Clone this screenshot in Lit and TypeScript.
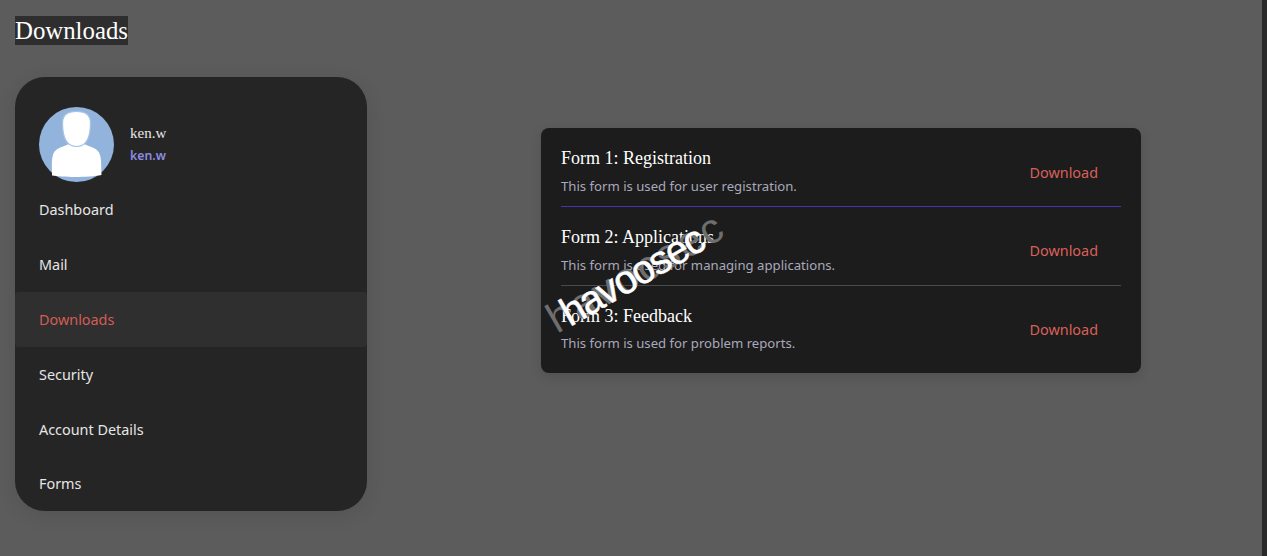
import { LitElement, html, css } from "lit";
import { customElement } from "lit/decorators.js";

const SANS = css`"Noto Sans", sans-serif`;

@customElement("app-root")
export class AppRoot extends LitElement {
  static styles = css`
    :host {
      display: block;
      width: 1267px;
      height: 556px;
      background: #5c5c5c;
      position: relative;
      overflow: hidden;
      font-family: "Liberation Serif", serif;
    }
    .page {
      display: flex;
      flex-direction: column;
      height: 100%;
      padding: 16px 0 0 15px;
      box-sizing: border-box;
      border-right: 5px solid #2a2a2a;
    }
    h1 {
      margin: 0 0 32px;
      font-size: 24.8px;
      line-height: 29px;
      font-weight: 400;
      color: #fff;
      align-self: flex-start;
      background: #2e2e2e;
    }
    .main {
      display: flex;
      align-items: flex-start;
    }
    .side {
      width: 352px;
      height: 434px;
      flex: none;
      box-sizing: border-box;
      background: #252525;
      border-radius: 30px;
      padding-top: 30px;
      box-shadow: 0 4px 20px rgba(0, 0, 0, 0.1);
      font-family: ${SANS};
      overflow: hidden;
    }
    .profile {
      display: flex;
      align-items: center;
      gap: 16px;
      padding-left: 24px;
    }
    .avatar {
      display: block;
      width: 75px;
      height: 75px;
    }
    .who {
      display: flex;
      flex-direction: column;
      gap: 6px;
    }
    .name {
      font-family: "Liberation Serif", serif;
      font-size: 15px;
      line-height: 17px;
      color: #e8e8e8;
    }
    .handle {
      font-size: 12.3px;
      line-height: 16px;
      font-weight: 600;
      color: #8b8be0;
    }
    nav {
      display: flex;
      flex-direction: column;
      margin-top: 0.5px;
    }
    nav a {
      display: flex;
      align-items: center;
      height: 54.8px;
      padding-left: 24px;
      font-size: 14.4px;
      color: #e6e6e6;
    }
    nav a.active {
      background: #2f2f2f;
      color: #d45c54;
      border-radius: 4px;
    }
    .wrap {
      flex: 1;
      padding: 51px 0 0 174px;
    }
    .card {
      width: 600px;
      box-sizing: border-box;
      background: #1c1c1c;
      border-radius: 8px;
      padding: 0 20px 8.6px;
      box-shadow: 0 4px 12px rgba(0, 0, 0, 0.12);
    }
    .row {
      display: flex;
      align-items: center;
      justify-content: space-between;
      height: 78.8px;
      padding-top: 10px;
      border-bottom: 1px solid #4a4a4a;
      box-sizing: border-box;
    }
    .row.one {
      border-bottom-color: #4b32b0;
    }
    .row.last {
      border-bottom-color: transparent;
    }
    .title {
      font-size: 18px;
      line-height: 21px;
      color: #fff;
    }
    .desc {
      margin-top: 8px;
      font-family: ${SANS};
      font-size: 13.15px;
      line-height: 18px;
      color: #a9a9bb;
    }
    .row.last .desc {
      margin-top: 7px;
    }
    .dl {
      margin-right: 23px;
      padding-top: 0.4px;
      font-family: ${SANS};
      font-size: 14.4px;
      color: #d9605a;
    }
    .mark,
    .ghost {
      position: absolute;
      font-family: "Liberation Sans", sans-serif;
      line-height: 40px;
      white-space: nowrap;
      transform-origin: left center;
      transform: rotate(-30deg);
    }
    .mark {
      left: 563px;
      top: 295px;
      font-size: 40px;
      letter-spacing: -1.6px;
      color: #fff;
      -webkit-text-stroke: 0.5px #fff;
    }
    .ghost {
      left: 550px;
      top: 302px;
      font-size: 42px;
      letter-spacing: 2.6px;
      color: #6e6e6e;
    }
  `;

  render() {
    const forms = [
      ["Form 1: Registration", "This form is used for user registration.", "one"],
      ["Form 2: Applications", "This form is used for managing applications.", ""],
      ["Form 3: Feedback", "This form is used for problem reports.", "last"],
    ];
    return html`
      <div class="page">
        <h1>Downloads</h1>
        <div class="main">
          <aside class="side">
            <div class="profile">
              <svg class="avatar" viewBox="0 0 75 75">
                <circle cx="37.5" cy="37.5" r="37.5" fill="#92b4dc" />
                <path d="M13 68.5 C13 60 12.5 54 13.5 50 C14.5 44 18 41.5 24 39.5 L30 37 L45 37 L51 39.5 C57 41.5 60.5 44 61.5 50 C62.5 54 62 60 62.5 68 C50 70.5 25 70.5 13 68.5 Z" fill="#fff" />
                <path d="M23.5 16 C23.5 8 28 4.5 37.5 4.5 C47 4.5 51.5 8 51.5 16 C51.5 32 46 39.5 37.5 39.5 C29 39.5 23.5 32 23.5 16 Z" fill="#fff" stroke="#a8c3e2" stroke-width="1.2" />
              </svg>
              <div class="who">
                <span class="name">ken.w</span>
                <span class="handle">ken.w</span>
              </div>
            </div>
            <nav>
              <a>Dashboard</a>
              <a>Mail</a>
              <a class="active">Downloads</a>
              <a>Security</a>
              <a>Account Details</a>
              <a>Forms</a>
            </nav>
          </aside>
          <div class="wrap">
            <section class="card">
              ${forms.map(
                ([t, d, c]) => html`
                  <div class="row ${c}">
                    <div>
                      <div class="title">${t}</div>
                      <div class="desc">${d}</div>
                    </div>
                    <span class="dl">Download</span>
                  </div>
                `
              )}
            </section>
          </div>
        </div>
      </div>
      <div class="ghost">havocsec</div>
      <div class="mark">havoosec</div>
    `;
  }
}
